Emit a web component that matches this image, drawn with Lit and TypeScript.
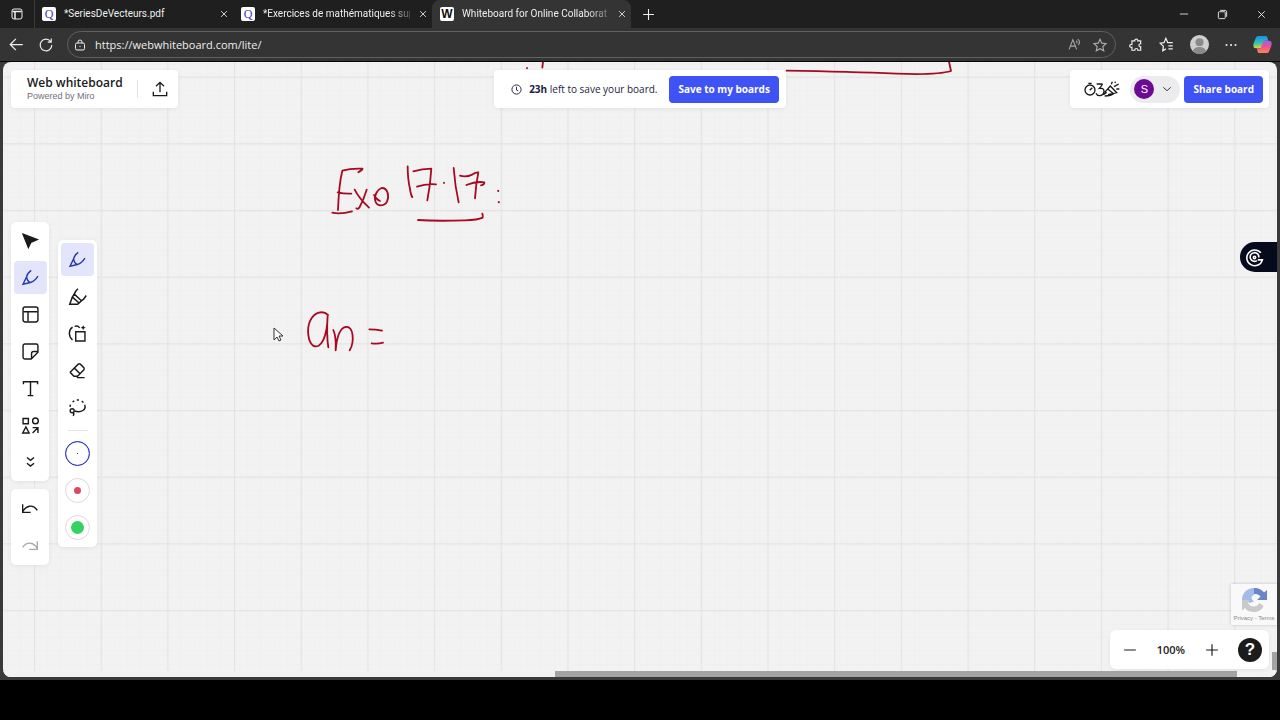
import { LitElement, html, css, svg, type TemplateResult } from "lit";
import { customElement, state } from "lit/decorators.js";
import { classMap } from "lit/directives/class-map.js";

const icon = (size: number, body: TemplateResult) => html`<svg
  class="icon" width=${size} height=${size} viewBox="0 0 24 24" aria-hidden="true">${body}</svg>`;

const icons = {
  close: svg`<path d="M5 5l14 14M19 5L5 19"/>`,
  plus: svg`<path d="M12 2v20M2 12h20"/>`,
  minus: svg`<path d="M2 12h20"/>`,
  select: svg`<path d="M1.500 3l20 7.500-9 4-3.500 7.500z" fill="currentColor"/>`,
  pen: svg`<path d="M13 2C9 5 7 8 6.500 11L1.500 21.500l10.500-2.500c5-1.500 8-5 10.500-9M6.500 11c.5 4 2.500 7 5.500 8"/>`,
  marker: svg`<path d="M12 1C9.500 3 8 5.500 7 8l9.500 9c2.500-1 4.500-4 6.500-7M7 8l-2.500 4 9 8 3-3M4.500 12L1 21.500h10.500l2-1.500"/>`,
  template: svg`<rect x="1.500" y="1.500" width="21" height="21" rx="3"/><path d="M2 8h20M8.500 8v14"/>`,
  sticky: svg`<path d="M22.500 12V4A2.500 2.500 0 0 0 20 1.500H4A2.500 2.500 0 0 0 1.500 4v16A2.500 2.500 0 0 0 4 22.500h9l9.500-9.500v-1h-6a3 3 0 0 0-3 3v7"/>`,
  text: svg`<path d="M2 6V2.500h20V6M12 3v19M8 22h8"/>`,
  shapes: svg`<path d="M1.500 2h7.500v7.500H1.500zM5.500 14L10 22.500H1zM15 22.500l7-7M15 15h7.500v7.500"/><circle cx="19" cy="5.500" r="4"/>`,
  more: svg`<path d="M7 5l5 4 5-4M7 13l5 4 5-4"/>`,
  undo: svg`<path d="M1 5v12h12M1 16C6 7 16 4 23 14"/>`,
  redo: svg`<path d="M23 5v12H11M23 16C18 7 8 4 1 14"/>`,
  smart: svg`<path d="M9.500 9.500h13v13h-13zM5 21C-1 16-1 7 5 3M8 2c3-1 5-1 7 2"/><path d="M20 0l1 2.500L23.500 4 21 5l-1 2.500L19 5l-2.500-1L19 2.500z" fill="currentColor" stroke="none"/>`,
  eraser: svg`<path d="M2 14L13 3q1.500-1 3 0l5 5q1 1.500 0 3L12 20H7l-5-5zM8 9l8 8M11 22h11"/>`,
  lasso: svg`<path d="M1.500 11l.5-3M5 4l2.500-1.500M11 1.500h3M18 3l2.500 2M22 8c3 7-5 12-14 9M6 24c1-2 1-4-.5-5"/><circle cx="4.500" cy="16.500" r="2.800"/>`,
  upload: svg`<path d="M2 16v6h20v-6M12 17V3M6 8l6-6 6 6"/>`,
  chevron: svg`<path d="M3 8l9 8 9-8"/>`,
  clock: svg`<circle cx="12" cy="12" r="10"/><path d="M12 6v7l4 2"/>`,
  back: svg`<path d="M22 12H3M11 3l-9 9 9 9"/>`,
  reload: svg`<path d="M20 6a10 10 0 1 0 2 6M21 1v6h-6"/>`,
  lock: svg`<rect x="3" y="8" width="18" height="14" rx="3"/><path d="M8 8V6a4 4 0 0 1 8 0v2M12 14v2"/>`,
  star: svg`<path d="M12 2l3 6.800 7.300.8-5.400 5 1.500 7.400-6.400-3.700L5.600 22l1.500-7.400-5.400-5L9 8.800z"/>`,
  read: svg`<path d="M2 21L9 3l7 18M4.500 15h9M15 5c2 1 2 4 1 5M18 2c4 3 4 8 1 11"/>`,
  puzzle: svg`<path d="M5 5h5c-1-4 6-4 5 0h5v5c-4-1-4 6 0 5v6h-5c1-4-6-4-5 0H5v-5c-5 1-5-6 0-5z"/>`,
  favs: svg`<path d="M11 19l-5 3 1-7-5-5 6-1 3-7 3 7h8M15 14h7M15 19h7"/>`,
  dots: svg`<path d="M3 12h.1M12 12h.1M21 12h.1" stroke-width="4" stroke-linecap="round"/>`,
  restore: svg`<rect x="3" y="6" width="15" height="15" rx="2"/><path d="M7 3h11a3 3 0 0 1 3 3v11"/>`,
  panes: svg`<rect x="2" y="2" width="20" height="20" rx="4"/><path d="M3 7h18M8 8v14" stroke-width="3"/>`,
};

type Tool = { id: string; label: string; art: TemplateResult };
const mainTools: Tool[] = [
  { id: "select", label: "Select", art: icons.select },
  { id: "pen", label: "Pen", art: icons.pen },
  { id: "template", label: "Templates", art: icons.template },
  { id: "sticky", label: "Sticky note", art: icons.sticky },
  { id: "text", label: "Text", art: icons.text },
  { id: "shapes", label: "Shapes and lines", art: icons.shapes },
  { id: "more", label: "More tools", art: icons.more },
];
const penTools: Tool[] = [
  { id: "pen", label: "Pen", art: icons.pen },
  { id: "marker", label: "Highlighter", art: icons.marker },
  { id: "smart", label: "Smart drawing", art: icons.smart },
  { id: "eraser", label: "Eraser", art: icons.eraser },
  { id: "lasso", label: "Lasso", art: icons.lasso },
];

const shared = css`
  * { box-sizing: border-box; }
  button, input { font: inherit; color: inherit; border: 0; margin: 0; padding: 0; background: none; }
  button { display: inline-flex; align-items: center; justify-content: center; flex: none; cursor: pointer; }
  .icon { display: block; flex: none; fill: none; stroke: currentColor; stroke-width: 2; overflow: visible; }
`;

@customElement("browser-chrome")
export class BrowserChrome extends LitElement {
  static styles = [shared, css`
    :host { display: block; color: #eee; font: 11px/16px "Open Sans", sans-serif; background: #343434; border-bottom: 1px solid #050505; }
    .tabs { display: flex; align-items: stretch; height: 28px; background: #1f1f1f; padding-right: 12px; }
    .panes { width: 34px; }
    .tab { display: flex; align-items: center; width: 199px; min-width: 0; gap: 8px; padding: 0 4px 0 7px; border-left: 1px solid transparent; }
    .tab.first { border-left-color: #3c3c3c; }
    .tab.active { background: #343434; border-radius: 8px 8px 0 0; }
    .fav { flex: none; width: 14px; height: 14px; border-radius: 2px; background: #fff; color: #3d3aa8; font: 12px/14px "Liberation Serif", serif; text-align: center; }
    .fav.w { color: #111; font: bold 12px/14px "Liberation Sans", sans-serif; }
    .title { flex: 1; white-space: nowrap; font: 10px/16px Roboto, sans-serif; min-width: 0; }
    .title.long { -webkit-mask-image: linear-gradient(90deg, #000 85%, #0004); mask-image: linear-gradient(90deg, #000 85%, #0004); }
    .new { width: 34px; }
    .spacer { flex: 1; }
    .win { width: 39px; }
    .win.last { width: 14px; margin-left: 12px; }
    .bar { display: flex; align-items: center; height: 33px; padding: 0 8px; }
    .nav { width: 16px; margin-right: 14px; }
    .address { flex: 1; display: flex; align-items: center; gap: 9px; height: 27px; border: 1px solid #606060; border-radius: 14px; padding: 0 8px 0 6px; margin: 0 13px 0 -1px; min-width: 0; }
    .address input { flex: 1; min-width: 0; outline: 0; }
    .dim { color: #aaa; }
    .dim + .dim { margin-left: 3px; }
    .right { display: flex; align-items: center; gap: 16px; }
  `];

  private tab(title: string, fav: string, kind = "") {
    return html`<div class=${"tab " + kind}>
      <span class=${classMap({ fav: true, w: fav === "W" })}>${fav}</span>
      <span class=${classMap({ title: true, long: kind !== "first" })}>${title}</span>
      <button aria-label="Close tab">${icon(10, icons.close)}</button>
    </div>`;
  }

  render() {
    return html`
      <div class="tabs">
        <button class="panes" aria-label="Tab actions">${icon(12, icons.panes)}</button>
        ${this.tab("*SeriesDeVecteurs.pdf", "Q", "first")}
        ${this.tab("*Exercices de mathématiques sup", "Q")}
        ${this.tab("Whiteboard for Online Collaborat", "W", "active")}
        <button class="new" aria-label="New tab">${icon(13, icons.plus)}</button>
        <span class="spacer"></span>
        <button class="win" aria-label="Minimise">${icon(10, icons.minus)}</button>
        <button class="win" aria-label="Restore">${icon(11, icons.restore)}</button>
        <button class="win last" aria-label="Close">${icon(11, icons.close)}</button>
      </div>
      <div class="bar">
        <button class="nav" aria-label="Back">${icon(15, icons.back)}</button>
        <button class="nav" aria-label="Reload">${icon(14, icons.reload)}</button>
        <div class="address">
          ${icon(12, icons.lock)}
          <input aria-label="Address" value="https://webwhiteboard.com/lite/" />
          <button class="dim" aria-label="Read aloud">${icon(13, icons.read)}</button>
          <button class="dim" aria-label="Add to favourites">${icon(14, icons.star)}</button>
        </div>
        <div class="right">
          <button aria-label="Extensions">${icon(14, icons.puzzle)}</button>
          <button aria-label="Favourites">${icon(15, icons.favs)}</button>
          <button aria-label="Profile">
            <svg width="19" height="19" viewBox="0 0 20 20" aria-hidden="true"><circle cx="10" cy="10" r="10" fill="#cfcfcf"/><circle cx="10" cy="7.500" r="4.200" fill="#8a8a8a"/><path d="M3 17c1-6 13-6 14 0-4 4-10 4-14 0z" fill="#8a8a8a"/></svg>
          </button>
          <button aria-label="Settings">${icon(12, icons.dots)}</button>
          <button aria-label="Copilot">
            <svg width="19" height="19" viewBox="0 0 20 20" aria-hidden="true">
              <defs>
                <linearGradient id="a" x2="0" y2="1"><stop stop-color="#1a8df0"/><stop offset=".6" stop-color="#37c7a0"/><stop offset="1" stop-color="#e8d43a"/></linearGradient>
                <linearGradient id="b" x2="0" y2="1"><stop stop-color="#a05cf0"/><stop offset=".5" stop-color="#f0508c"/><stop offset="1" stop-color="#f98a4b"/></linearGradient>
              </defs>
              <path d="M6 1h7c2 0 2 1 2.500 3l.5 2h-4L9 14H3c-3 0-3-3-2-6l2-5c.6-1.500 1.500-2 3-2z" fill="url(#a)"/>
              <path d="M14 19H7c-2 0-2-1-2.500-3L4 14h4l3-8h6c3 0 3 3 2 6l-2 5c-.6 1.500-1.500 2-3 2z" fill="url(#b)"/>
            </svg>
          </button>
        </div>
      </div>`;
  }
}

@customElement("board-ink")
export class BoardInk extends LitElement {
  static styles = css`
    :host { display: block; }
    svg { display: block; width: 100%; height: 100%; }
    .minor { fill: none; stroke: #efefef; }
    .major { fill: none; stroke: #e4e4e5; stroke-width: 1.2; }
    .ink { fill: none; stroke: #a50a22; stroke-width: 5.4; stroke-linecap: round; stroke-linejoin: round; }
  `;

  render() {
    return html`<svg role="img" aria-label="Handwritten notes in red ink">
      <defs>
        <pattern id="fine" width="13.336" height="13.336" x="31" y="15" patternUnits="userSpaceOnUse"><path class="minor" d="M.5 0v14M0 .5h14"/></pattern>
        <pattern id="coarse" width="66.680" height="66.680" x="31" y="14.500" patternUnits="userSpaceOnUse"><path class="major" d="M.6 0v67M0 .6h67"/></pattern>
      </defs>
      <rect width="100%" height="100%" fill="url(#fine)"/>
      <rect width="100%" height="100%" fill="url(#coarse)"/>
      <g class="ink" transform="translate(257 78) scale(.33333)">
        <path d="M295 97q15-10 12-11-32-2-60 6-10 38-13 118M233 157q20 5 41 4M217 218q24 6 59-4M284 149q13 26 43 54M320 149q-9 30-21 52-4 8-10 4M342 165q8 14 18 18M365 144c-14 5-25 25-18 42 6 14 27 13 34-1 8-19 1-42-16-41z"/>
        <path d="M443 79q0 38 7 68 3 20 7 24M460 94q26-8 54-8-3 50-12 95M471 140q28-10 57-7M552 128v1M581 84q4 55 15 103M600 107q18 6 38-4 10-7 17-6-7 35-10 78M619 135q30-12 54-8 1 7-10 9M714 152l1 1M716 186l1 1M474 240q55 4 140 1 40-1 54-8 1-7-1-12"/>
        <path d="M204 525c-15-15-40-9-53 16-12 25-7 64 8 76 24 12 43-25 44-92q-4 60 2 97M220 570q9 20 7 61 5-64 30-70c24-5 27 45 12 70M328 568q19 0 38 4M335 610q18 3 34-2"/>
      </g>
      <g class="ink" transform="translate(487 -7) scale(.33333)">
        <path d="M159 20l-2 18M111 39v1M890 47q190 3 330 9c80 3 130 2 163-8l-6-28"/>
      </g>
      <path d="M271 266v12l3-3 2 4 2-1-2-4h4z" fill="#fff" stroke="#333"/>
    </svg>`;
  }
}

@customElement("app-root")
export class AppRoot extends LitElement {
  @state() private tool = "pen";
  @state() private penTool = "pen";

  static styles = [shared, css`
    :host { display: grid; grid-template-rows: 1fr 40px; height: 100vh; min-height: 600px; background: #000; font: 10px/16px "Open Sans", sans-serif; color: #1a1a1a; }
    .window { display: flex; flex-direction: column; background: #3a3a3a; min-width: 0; }
    .board { position: relative; flex: 1; display: flex; flex-direction: column; margin: 0 3px 3px; border-radius: 8px; overflow: hidden; background: #f2f2f2; }
    .ink { position: absolute; inset: 0; }
    .top { position: relative; display: grid; grid-template-columns: 1fr auto 1fr; align-items: center; padding: 8px 8px 2px; }
    .card { display: flex; align-items: center; height: 38px; background: #fff; border-radius: 4px; box-shadow: 0 1px 4px #0001; }
    .brand { justify-self: start; padding: 0 10px 0 16px; }
    .name { margin: 0; font: 600 12px/14px "Open Sans", sans-serif; }
    .by { margin: 0; font: 9px/12px "Liberation Sans", sans-serif; color: #70707c; }
    .rule { width: 1px; height: 18px; margin: 0 14px; background: #e4e4e4; }
    .notice { padding: 0 7px 0 17px; color: #1c1c40; }
    .notice .left { margin: 0 12px 0 7px; }
    .primary { height: 27px; padding: 0 9px; border-radius: 4px; background: #3f53f5; color: #fff; font-weight: 700; }
    .share { justify-self: end; padding: 0 6px 0 14px; }
    .user { display: flex; align-items: center; gap: 8px; height: 27px; border-radius: 14px; background: #ececee; padding: 0 8px 0 4px; margin: 0 4px 0 10px; }
    .avatar { width: 20px; height: 20px; border-radius: 50%; background: #6b0b93; color: #fff; font: 11px/20px "Liberation Sans", sans-serif; text-align: center; }
    .side { position: relative; flex: 1; display: flex; align-items: center; gap: 9px; padding-left: 8px; align-self: flex-start; }
    .stack { display: grid; gap: 8px; }
    .panel { display: flex; flex-direction: column; align-items: center; gap: 4px; padding: 2px; width: 38px; background: #fff; border-radius: 5px; box-shadow: 0 1px 4px #0001; }
    .pens { padding: 3px; width: 39px; }
    .tool { width: 33px; height: 33px; border-radius: 4px; }
    .tool.on { background: #e3e6fb; color: #2a3aa8; }
    .tool.off { color: #a9a9a9; }
    .history { padding: 3px 2px; }
    .hr { width: 20px; height: 1px; margin: 2px 0; background: #e4e4e4; }
    .swatch { width: 25px; height: 25px; margin: 4px 0; border: 1px solid #e6d5d8; border-radius: 50%; }
    .swatch.on { border: 1px solid #1a1fc0; box-shadow: inset 0 0 1px #1a1fc0; }
    .dot { border-radius: 50%; }
    .dot.s { width: 1px; height: 1px; background: #000; }
    .dot.m { width: 7px; height: 7px; background: #dc4a62; }
    .dot.l { width: 13px; height: 13px; background: #35d262; }
    .assist { position: absolute; right: 0; top: 180px; width: 37px; height: 30px; border-radius: 15px 0 0 15px; background: #050a1c; color: #fff; justify-content: flex-start; padding-left: 5px; }
    .captcha { position: absolute; right: 0; bottom: 52px; width: 46px; height: 41px; display: grid; justify-items: center; align-content: center; gap: 2px; background: #f9f9f9; box-shadow: 0 0 3px #0003; font: 6px/7px "Liberation Sans", sans-serif; color: #888; }
    .captcha a { color: inherit; text-decoration: none; }
    .zoom { position: absolute; right: 8px; bottom: 8px; height: 39px; padding: 0 7px 0 13px; border-radius: 6px; }
    .level { margin: 0 20px; font-size: 11px; font-weight: 600; }
    .help { width: 24px; height: 24px; margin-left: 19px; border-radius: 50%; background: #1c1c1c; color: #fff; font: bold 17px/24px "Liberation Sans", sans-serif; }
    .hbar { position: absolute; bottom: 0; left: 0; right: 0; height: 6px; background: #f2f2f2; }
    .hthumb { height: 100%; margin: 0 40px 0 43.3%; background: #a3a3a3; }
    .vthumb { position: absolute; right: 0; bottom: 7px; width: 5px; height: 18px; background: #a3a3a3; }
  `];

  private tools(list: Tool[], current: string, pick: (id: string) => void) {
    return list.map((t) => html`<button
      class=${classMap({ tool: true, on: t.id === current })}
      aria-label=${t.label} aria-pressed=${t.id === current} @click=${() => pick(t.id)}
    >${icon(t.id === "marker" ? 18 : 17, t.art)}</button>`);
  }

  render() {
    return html`
      <div class="window">
        <browser-chrome></browser-chrome>
        <main class="board">
          <board-ink class="ink"></board-ink>
          <header class="top">
            <div class="card brand">
              <div><h1 class="name">Web whiteboard</h1><p class="by">Powered by Miro</p></div>
              <span class="rule"></span>
              <button aria-label="Export">${icon(16, icons.upload)}</button>
            </div>
            <div class="card notice">
              ${icon(11, icons.clock)}
              <span class="left"><b>23h</b> left to save your board.</span>
              <button class="primary">Save to my boards</button>
            </div>
            <div class="card share">
              <button aria-label="Timer and reactions">
                <svg class="icon" width="36" height="18" viewBox="0 0 108 54" aria-hidden="true">
                  <g stroke-width="4"><circle cx="18" cy="30" r="15"/><path d="M17 31l8-8M13 10h10M38 12h16q3 1-8 13 14-2 14 9c-2 16-20 16-24 6M62 37L79 18l19 20-26 6M72 28l17 13M62 48q20 0 28-8M82 13l3-8M90 20l14-8M97 27h9M92 8l3-3M58 44l10-7"/></g>
                </svg>
              </button>
              <button class="user" aria-label="Account"><span class="avatar">S</span>${icon(10, icons.chevron)}</button>
              <button class="primary">Share board</button>
            </div>
          </header>
          <div class="side">
            <div class="stack">
              <nav class="panel" aria-label="Tools">${this.tools(mainTools, this.tool, (id) => (this.tool = id))}</nav>
              <div class="panel history">
                <button class="tool" aria-label="Undo">${icon(16, icons.undo)}</button>
                <button class="tool off" aria-label="Redo" disabled>${icon(16, icons.redo)}</button>
              </div>
            </div>
            <div class="panel pens" role="toolbar" aria-label="Pen options">
              ${this.tools(penTools, this.penTool, (id) => (this.penTool = id))}
              <span class="hr"></span>
              <button class="swatch on" aria-label="Thin black"><span class="dot s"></span></button>
              <button class="swatch" aria-label="Medium red"><span class="dot m"></span></button>
              <button class="swatch" aria-label="Thick green"><span class="dot l"></span></button>
            </div>
          </div>
          <button class="assist" aria-label="Assistant">
            <svg class="icon" width="19" height="19" viewBox="0 0 24 24" aria-hidden="true"><path d="M20 6a10 10 0 1 0 2 9h-6M15 16a5.500 5.500 0 1 1 2.500-4"/><circle cx="12" cy="12" r="1.500"/></svg>
          </button>
          <div class="captcha">
            <svg width="27" height="26" viewBox="0 0 54 52" aria-hidden="true">
              <path d="M2 26C2 12 12 2 26 2v14c-5 1-6 5-4 9l4 4-9 3-7-6z" fill="#a3bbe8"/>
              <path d="M26 2c10 0 16 4 20 9l6-5v20H32l7-7c-3-4-7-5-13-5z" fill="#6a86c8"/>
              <path d="M2 26l15 0-3 6c5 10 18 9 23 0l8 6C42 46 34 50 26 50 17 50 11 47 8 42l-6 5z" fill="#cacace"/>
            </svg>
            <span><a href="#privacy">Privacy</a> - <a href="#terms">Terms</a></span>
          </div>
          <div class="hbar"><div class="hthumb"></div></div>
          <div class="vthumb"></div>
          <div class="card zoom">
            <button aria-label="Zoom out">${icon(14, icons.minus)}</button>
            <span class="level">100%</span>
            <button aria-label="Zoom in">${icon(14, icons.plus)}</button>
            <button class="help" aria-label="Help">?</button>
          </div>
        </main>
      </div>
      <footer></footer>`;
  }
}
